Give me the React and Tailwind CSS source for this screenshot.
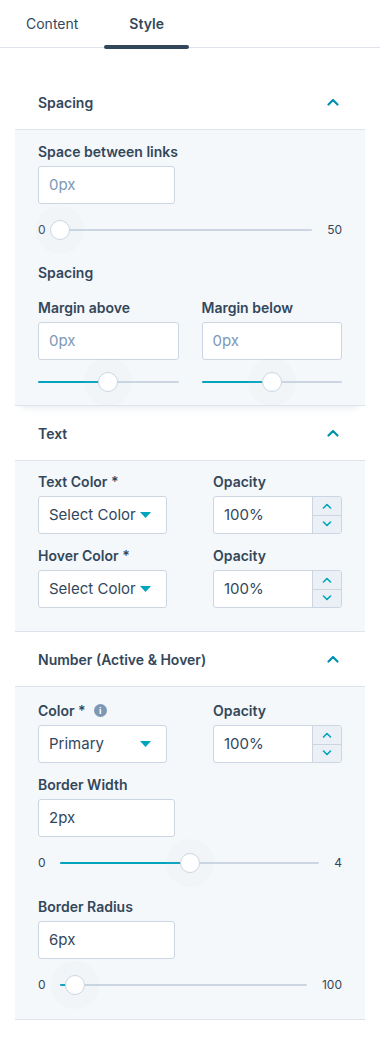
import React from 'react';

const font = { fontFamily: 'Inter, "Noto Sans", sans-serif' };

function ChevronUp({ className = '' }) {
    return (
        <svg width="12" height="8" viewBox="0 0 12 8" className={className} fill="none">
            <path d="M1.5 6.5L6 2l4.5 4.5" stroke="#0091ae" strokeWidth="2.2" strokeLinecap="round" strokeLinejoin="round" />
        </svg>
    );
}

function SmallChevron({ up }) {
    return (
        <svg width="10" height="6" viewBox="0 0 10 6" fill="none">
            <path
                d={up ? 'M1.5 5L5 1.5 8.5 5' : 'M1.5 1L5 4.5 8.5 1'}
                stroke="#00a4bd"
                strokeWidth="1.6"
                strokeLinecap="round"
                strokeLinejoin="round"
            />
        </svg>
    );
}

function Label({ children, info }) {
    return (
        <div className="h-5 flex items-center gap-2 text-[14px] font-semibold text-[#33475b] mb-[5px]">
            <span>{children}</span>
            {info && (
                <span className="w-[13px] h-[13px] rounded-full bg-[#7c98b6] text-white text-[9px] font-bold flex items-center justify-center leading-none">
                    i
                </span>
            )}
        </div>
    );
}

function TextInput({ value, placeholder, className = 'w-[137px]' }) {
    return (
        <div
            className={`${className} h-[38px] rounded-[3px] border border-[#cbd6e2] bg-white flex items-center px-[10px] text-[15px] ${
                placeholder ? 'text-[#7c98b6]' : 'text-[#33475b]'
            }`}
        >
            {value}
        </div>
    );
}

function Select({ value }) {
    return (
        <div className="w-full h-[38px] rounded-[3px] border border-[#cbd6e2] bg-white flex items-center justify-between pl-[10px] pr-[15px] text-[15px] text-[#33475b]">
            <span>{value}</span>
            <svg width="11" height="6" viewBox="0 0 11 6">
                <path d="M0 0h11L5.5 6z" fill="#00a4bd" />
            </svg>
        </div>
    );
}

function Opacity() {
    return (
        <div className="w-full h-[38px] rounded-[3px] border border-[#cbd6e2] bg-white flex overflow-hidden text-[15px] text-[#33475b]">
            <div className="flex-1 flex items-center px-[10px]">100%</div>
            <div className="w-[29px] border-l border-[#cbd6e2] bg-[#eaf0f6] flex flex-col">
                <div className="flex-1 flex items-center justify-center border-b border-[#cbd6e2]">
                    <SmallChevron up />
                </div>
                <div className="flex-1 flex items-center justify-center">
                    <SmallChevron />
                </div>
            </div>
        </div>
    );
}

function Track({ pct }) {
    return (
        <div className="relative flex-1 h-5 flex items-center">
            <div className="w-full h-[2px] bg-[#cbd6e2] rounded-full" />
            <div className="absolute left-0 h-[2px] bg-[#00a4bd] rounded-full" style={{ width: `${pct}%` }} />
            <div
                className="absolute top-1/2 w-5 h-5 -translate-x-1/2 -translate-y-1/2 rounded-full bg-white border border-[#cbd6e2] shadow-[0_0_0_14px_rgba(203,214,226,0.07)]"
                style={{ left: `${pct}%` }}
            />
        </div>
    );
}

function Slider({ min, max, pct }) {
    return (
        <div className="h-8 flex items-center gap-[15px] text-[12px] text-[#33475b]">
            <span className="w-[7px] text-center">{min}</span>
            <Track pct={pct} />
            <span>{max}</span>
        </div>
    );
}

function Section({ title, children, shadow }) {
    return (
        <div className={`mx-[15px] ${shadow ? 'shadow-[0_9px_7px_-7px_rgba(203,214,226,0.45)]' : ''}`}>
            <div className="h-[55px] border-b border-[#dfe3eb] flex items-center justify-between pl-[23px] pr-[26px]">
                <span className="text-[14px] font-semibold text-[#33475b]">{title}</span>
                <ChevronUp />
            </div>
            <div className="bg-[#f5f8fa] border-b border-[#dfe3eb] px-[23px]">{children}</div>
        </div>
    );
}

export default function App() {
    return (
        <div className="w-[380px] h-[1040px] bg-white overflow-hidden" style={font}>
            {/* Tabs */}
            <div className="h-12 border-b border-[#dfe3eb] flex">
                <div className="px-[26px] h-full flex items-center text-[14px] text-[#33475b]">Content</div>
                <div className="relative px-[25px] h-full flex items-center text-[14px] font-semibold text-[#33475b]">
                    Style
                    <div className="absolute left-0 right-0 -bottom-[2px] h-[4px] rounded-full bg-[#33475b]" />
                </div>
            </div>

            <div className="h-[27px]" />

            {/* Spacing */}
            <Section title="Spacing" shadow>
                <div className="pt-[11px]">
                    <Label>Space between links</Label>
                    <TextInput value="0px" placeholder />
                    <div className="mt-[10px]">
                        <Slider min="0" max="50" pct={0} />
                    </div>
                </div>
                <div className="mt-[16px]">
                    <Label>Spacing</Label>
                </div>
                <div className="grid grid-cols-2 gap-[23px] mt-[15px] pb-[13px]">
                    <div>
                        <Label>Margin above</Label>
                        <TextInput value="0px" placeholder className="w-full" />
                        <div className="mt-[12px]">
                            <Track pct={50} />
                        </div>
                    </div>
                    <div>
                        <Label>Margin below</Label>
                        <TextInput value="0px" placeholder className="w-full" />
                        <div className="mt-[12px]">
                            <Track pct={50} />
                        </div>
                    </div>
                </div>
            </Section>

            {/* Text */}
            <Section title="Text">
                <div className="grid grid-cols-2 gap-x-[46px] gap-y-[11px] pt-[10px] pb-[23px]">
                    <div>
                        <Label>Text Color *</Label>
                        <Select value="Select Color" />
                    </div>
                    <div>
                        <Label>Opacity</Label>
                        <Opacity />
                    </div>
                    <div>
                        <Label>Hover Color *</Label>
                        <Select value="Select Color" />
                    </div>
                    <div>
                        <Label>Opacity</Label>
                        <Opacity />
                    </div>
                </div>
            </Section>

            {/* Number */}
            <Section title="Number (Active & Hover)">
                <div className="grid grid-cols-2 gap-x-[46px] pt-[13px]">
                    <div>
                        <Label info>Color *</Label>
                        <Select value="Primary" />
                    </div>
                    <div>
                        <Label>Opacity</Label>
                        <Opacity />
                    </div>
                </div>
                <div className="mt-[11px]">
                    <Label>Border Width</Label>
                    <TextInput value="2px" />
                    <div className="mt-[10px]">
                        <Slider min="0" max="4" pct={50} />
                    </div>
                </div>
                <div className="mt-[17px] pb-[18px]">
                    <Label>Border Radius</Label>
                    <TextInput value="6px" />
                    <div className="mt-[10px]">
                        <Slider min="0" max="100" pct={6} />
                    </div>
                </div>
            </Section>
        </div>
    );
}
